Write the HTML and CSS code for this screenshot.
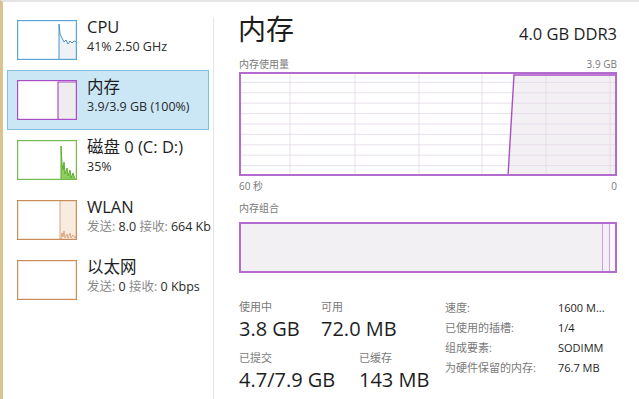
FILE: index.html
```html
<!DOCTYPE html>
<html lang="zh-CN">
<head>
    <meta charset="UTF-8">
    <meta name="viewport" content="width=device-width, initial-scale=1.0">
    <title>任务管理器 - 性能</title>
    <link rel="stylesheet" href="styles.css">
</head>
<body>
    <div class="window">
        <aside class="sidebar">
            <div class="item">
                <svg class="thumb" viewBox="0 0 60 40" width="60" height="40">
                    <polygon class="fill-cpu" points="42,40 42,4 43,14 45,18 47,22 49,20 51,24 53,21 55,23 57,21 60,22 60,40"/>
                    <polyline class="line-cpu" points="42,40 42,4 43,14 45,18 47,22 49,20 51,24 53,21 55,23 57,21 60,22"/>
                    <rect class="frame-cpu" x="0.5" y="0.5" width="59" height="39"/>
                </svg>
                <div class="info">
                    <div class="name">CPU</div>
                    <div class="detail">41% 2.50 GHz</div>
                </div>
            </div>
            <div class="item selected">
                <svg class="thumb" viewBox="0 0 60 40" width="60" height="40">
                    <polygon class="fill-mem" points="41,40 41,2 60,2 60,40"/>
                    <polyline class="line-mem" points="41,40 41,2 60,2"/>
                    <rect class="frame-mem" x="0.5" y="0.5" width="59" height="39"/>
                </svg>
                <div class="info">
                    <div class="name">内存</div>
                    <div class="detail">3.9/3.9 GB (100%)</div>
                </div>
            </div>
            <div class="item">
                <svg class="thumb" viewBox="0 0 60 40" width="60" height="40">
                    <polygon class="fill-disk" points="44,40 44,6 45,24 46,30 47,22 48,34 50,28 51,36 53,30 54,38 56,33 58,39 60,40"/>
                    <polyline class="line-disk" points="44,40 44,6 45,24 46,30 47,22 48,34 50,28 51,36 53,30 54,38 56,33 58,39 60,40"/>
                    <rect class="frame-disk" x="0.5" y="0.5" width="59" height="39"/>
                </svg>
                <div class="info">
                    <div class="name">磁盘 0 (C: D:)</div>
                    <div class="detail">35%</div>
                </div>
            </div>
            <div class="item">
                <svg class="thumb" viewBox="0 0 60 40" width="60" height="40">
                    <rect class="fill-net" x="43" y="1" width="17" height="39"/>
                    <line class="grid-net" x1="43" y1="1" x2="43" y2="40"/>
                    <polyline class="line-net" points="44,39 45,33 46,37 47,31 48,38 50,34 51,38 53,33 54,38 56,35 58,38 60,34"/>
                    <rect class="frame-net" x="0.5" y="0.5" width="59" height="39"/>
                </svg>
                <div class="info">
                    <div class="name">WLAN</div>
                    <div class="detail"><span class="muted">发送:</span> 8.0 <span class="muted">接收:</span> 664 Kb</div>
                </div>
            </div>
            <div class="item">
                <svg class="thumb" viewBox="0 0 60 40" width="60" height="40">
                    <rect class="frame-net" x="0.5" y="0.5" width="59" height="39"/>
                </svg>
                <div class="info">
                    <div class="name">以太网</div>
                    <div class="detail"><span class="muted">发送:</span> 0 <span class="muted">接收:</span> 0 Kbps</div>
                </div>
            </div>
        </aside>

        <div class="divider"></div>

        <main class="panel">
            <header class="panel-head">
                <h1>内存</h1>
                <span class="spec">4.0 GB DDR3</span>
            </header>

            <div class="axis-row">
                <span>内存使用量</span>
                <span>3.9 GB</span>
            </div>
            <svg class="usage-chart" viewBox="0 0 378 104" width="378" height="104">
                <polygon class="usage-fill" points="269,104 275,3 378,3 378,104"/>
                <g class="grid">
                    <line x1="51" y1="0" x2="51" y2="104"/>
                    <line x1="116" y1="0" x2="116" y2="104"/>
                    <line x1="180" y1="0" x2="180" y2="104"/>
                    <line x1="243" y1="0" x2="243" y2="104"/>
                    <line x1="307" y1="0" x2="307" y2="104"/>
                    <line x1="371" y1="0" x2="371" y2="104"/>
                    <line x1="0" y1="10.4" x2="378" y2="10.4"/>
                    <line x1="0" y1="20.8" x2="378" y2="20.8"/>
                    <line x1="0" y1="31.2" x2="378" y2="31.2"/>
                    <line x1="0" y1="41.6" x2="378" y2="41.6"/>
                    <line x1="0" y1="52" x2="378" y2="52"/>
                    <line x1="0" y1="62.4" x2="378" y2="62.4"/>
                    <line x1="0" y1="72.8" x2="378" y2="72.8"/>
                    <line x1="0" y1="83.2" x2="378" y2="83.2"/>
                    <line x1="0" y1="93.6" x2="378" y2="93.6"/>
                </g>
                <polyline class="usage-line" points="269,104 275,3 378,3"/>
                <rect class="usage-frame" x="1" y="1" width="376" height="102"/>
            </svg>
            <div class="axis-row axis-bottom">
                <span>60 秒</span>
                <span>0</span>
            </div>

            <div class="axis-label">内存组合</div>
            <div class="composition">
                <div class="seg in-use"></div>
                <div class="seg modified"></div>
                <div class="seg standby"></div>
            </div>

            <section class="stats">
                <div class="stat-grid">
                    <div class="stat">
                        <div class="stat-label">使用中</div>
                        <div class="stat-value">3.8 GB</div>
                    </div>
                    <div class="stat">
                        <div class="stat-label">可用</div>
                        <div class="stat-value">72.0 MB</div>
                    </div>
                    <div class="stat">
                        <div class="stat-label">已提交</div>
                        <div class="stat-value">4.7/7.9 GB</div>
                    </div>
                    <div class="stat">
                        <div class="stat-label">已缓存</div>
                        <div class="stat-value">143 MB</div>
                    </div>
                </div>
                <dl class="props">
                    <dt>速度:</dt><dd>1600 M...</dd>
                    <dt>已使用的插槽:</dt><dd>1/4</dd>
                    <dt>组成要素:</dt><dd>SODIMM</dd>
                    <dt>为硬件保留的内存:</dt><dd>76.7 MB</dd>
                </dl>
            </section>
        </main>
    </div>
</body>
</html>
```

FILE: styles.css
```css
body {
    margin: 0;
    background-color: #fff;
    font-family: "Open Sans", "Noto Sans CJK SC", sans-serif;
    color: #1e1e1e;
}
.window {
    display: flex;
    height: 397px;
    border-left: 3px solid #d8c391;
    border-top: 2px solid #e4e4e4;
    overflow: hidden;
}
.sidebar {
    width: 206px;
    padding: 8px 0 0 4px;
    flex-shrink: 0;
}
.divider {
    width: 1px;
    margin-top: 15px;
    background-color: #e6e6e6;
    flex-shrink: 0;
}
.item {
    display: flex;
    gap: 10px;
    width: 182px;
    height: 40px;
    padding: 9px;
    border: 1px solid transparent;
    white-space: nowrap;
}
.item.selected {
    background-color: #cbe7f6;
    border-color: #7fc0e6;
}
.thumb {
    flex-shrink: 0;
    background-color: #fff;
}
.info {
    margin-top: -3px;
}
.name {
    font-size: 16.5px;
    height: 20px;
    line-height: 20px;
}
.detail {
    font-size: 12.5px;
    height: 17px;
    line-height: 17px;
    margin-top: 1px;
    color: #2a2a2a;
}
.muted {
    color: #8a8a8a;
}

/* thumbnails */
.frame-cpu, .frame-mem, .frame-disk, .frame-net {
    fill: none;
    stroke-width: 1.4;
}
.frame-cpu { stroke: #5aa6d3; }
.frame-mem { stroke: #a94ec6; }
.frame-disk { stroke: #74bb4a; }
.frame-net { stroke: #c98b57; }
.fill-cpu { fill: #eef2f6; }
.line-cpu { fill: none; stroke: #4a93c4; stroke-width: 1; }
.fill-mem { fill: #efecf0; }
.line-mem { fill: none; stroke: #a94ec6; stroke-width: 1.2; }
.fill-disk { fill: #8fcf5f; }
.line-disk { fill: none; stroke: #5eae2e; stroke-width: 1; }
.fill-net { fill: #f8ebe0; }
.grid-net { stroke: #d9a67d; stroke-width: 1; }
.line-net { fill: none; stroke: #d39a6c; stroke-width: 0.8; }

/* main panel */
.panel {
    flex: 1;
    padding: 0 22px 0 24px;
    min-width: 0;
}
.panel-head {
    display: flex;
    justify-content: space-between;
    align-items: baseline;
    height: 54px;
}
h1 {
    margin: 0;
    font-weight: normal;
    font-size: 28px;
    line-height: 54px;
}
.spec {
    font-size: 16.5px;
}
.axis-row {
    display: flex;
    justify-content: space-between;
    font-size: 10px;
    line-height: 16px;
    color: #7a7a7a;
    padding-left: 1px;
}
.axis-bottom {
    margin-top: 2px;
}
.usage-chart {
    display: block;
    margin-left: 1px;
}
.grid line {
    stroke: #e4d9e8;
    stroke-width: 1;
    opacity: 0.8;
}
.usage-fill {
    fill: #f3f0f4;
}
.usage-line {
    fill: none;
    stroke: #a94ec6;
    stroke-width: 1.4;
}
.usage-frame {
    fill: none;
    stroke: #b36bcd;
    stroke-width: 2;
}
.axis-label {
    font-size: 10px;
    line-height: 16px;
    color: #7a7a7a;
    margin-top: 6px;
    padding-left: 1px;
}
.composition {
    display: flex;
    width: 374px;
    height: 47px;
    margin: 6px 0 0 1px;
    border: 2px solid #b36bcd;
}
.seg {
    height: 100%;
}
.in-use {
    flex: 1;
    background-color: #f2f0f3;
    border-right: 1px solid #c9a3d6;
}
.modified {
    width: 6px;
    background-color: #f4eef6;
    border-right: 1px solid #c9a3d6;
}
.standby {
    width: 5px;
    background-color: #fbf9fc;
}

/* stats */
.stats {
    display: flex;
    margin-top: 26px;
    padding-left: 1px;
}
.stat-grid {
    display: grid;
    grid-template-columns: 82px 120px;
    row-gap: 7px;
    width: 206px;
}
.stat:nth-child(3) {
    margin-right: -40px;
}
.stat:nth-child(4) {
    margin-left: 38px;
}
.stat-label {
    font-size: 11px;
    height: 16px;
    line-height: 16px;
    color: #7a7a7a;
}
.stat-value {
    font-size: 20px;
    height: 28px;
    line-height: 28px;
    white-space: nowrap;
}
.props {
    display: grid;
    grid-template-columns: 113px auto;
    grid-auto-rows: 20px;
    margin: -1px 0 0;
    font-size: 11px;
    line-height: 20px;
}
.props dt {
    color: #7a7a7a;
}
.props dd {
    margin: 0;
}
```
